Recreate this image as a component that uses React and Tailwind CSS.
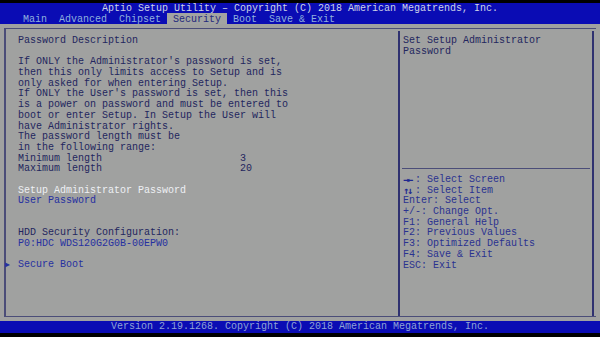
import React from 'react';

const tabs = ['Main', 'Advanced', 'Chipset', 'Security', 'Boot', 'Save & Exit'];

const description = [
  "If ONLY the Administrator's password is set,",
  'then this only limits access to Setup and is',
  'only asked for when entering Setup.',
  "If ONLY the User's password is set, then this",
  'is a power on password and must be entered to',
  'boot or enter Setup. In Setup the User will',
  'have Administrator rights.',
  'The password length must be',
  'in the following range:',
];

const keyHelp = [
  ['→←', ': Select Screen'],
  ['↑↓', ': Select Item'],
  ['', 'Enter: Select'],
  ['', '+/-: Change Opt.'],
  ['', 'F1: General Help'],
  ['', 'F2: Previous Values'],
  ['', 'F3: Optimized Defaults'],
  ['', 'F4: Save & Exit'],
  ['', 'ESC: Exit'],
];

const Line = ({ children, className = '' }) => (
  <div className={`h-[10.7px] whitespace-pre ${className}`}>{children}</div>
);

export default function App() {
  return (
    <div
      className="w-[600px] h-[337px] bg-black flex flex-col overflow-hidden text-[10px] leading-[10.7px]"
      style={{ fontFamily: '"Liberation Mono", "DejaVu Sans Mono", monospace' }}
    >
      <div className="h-[3px]" />
      {/* header */}
      <div className="h-[21px] bg-[#0a0cb4] flex flex-col">
        <div className="h-[10px] leading-[10px] text-center text-[#cdd3e6] pt-[1px]">
          Aptio Setup Utility – Copyright (C) 2018 American Megatrends, Inc.
        </div>
        <div className="flex pl-[17px] h-[11px] leading-[11px]">
          {tabs.map((t) => (
            <div
              key={t}
              className={`px-[6px] h-[11px] pt-[1px] ${
                t === 'Security' ? 'bg-[#a2a4a2] text-[#24287c]' : 'text-[#8fb0de]'
              }`}
            >
              {t}
            </div>
          ))}
        </div>
      </div>

      {/* body */}
      <div className="h-[297px] bg-[#a0a1a0] px-[4px] pt-[4px] pb-[4px] flex">
        <div className="flex-1 flex border-l-2 border-b border-t border-[#4b4d78]">
          {/* left panel */}
          <div className="w-[392px] pl-[12px] pt-[7px] text-[#23265e] relative">
            <Line>Password Description</Line>
            <Line />
            {description.map((l) => (
              <Line key={l}>{l}</Line>
            ))}
            <Line>
              <span className="inline-block w-[222px]">Minimum length</span>3
            </Line>
            <Line>
              <span className="inline-block w-[222px]">Maximum length</span>20
            </Line>
            <Line />
            <Line className="text-[#eef0f4]">Setup Administrator Password</Line>
            <Line className="text-[#2630a0]">User Password</Line>
            <Line />
            <Line />
            <Line>HDD Security Configuration:</Line>
            <Line className="text-[#2630a0]">P0:HDC WDS120G2G0B-00EPW0</Line>
            <Line />
            <Line className="text-[#2630a0] relative">
              <span className="absolute left-[-13px] top-0 text-[8px]">▶</span>
              Secure Boot
            </Line>
          </div>
          {/* right panel */}
          <div className="flex-1 flex flex-col border-l-2 border-r-2 border-[#2f3170] mr-[2px] mt-[2px]">
            <div className="h-[137px] pl-[3px] pt-[5px] text-[#23265e]">
              <Line>Set Setup Administrator</Line>
              <Line>Password</Line>
            </div>
            <div className="h-[1px] bg-[#4b4d78] mx-[2px]" />
            <div className="pl-[3px] pt-[6px] text-[#2a3290]">
              {keyHelp.map(([a, l]) => (
                <Line key={l} className="flex">
                  {a && (
                    <span
                      className="w-[12px] h-[10.7px] leading-[10.7px] font-bold text-[#1e2890] tracking-[-2px] overflow-hidden"
                      style={{ fontFamily: '"DejaVu Sans Mono", monospace' }}
                    >
                      {a}
                    </span>
                  )}
                  <span>{l}</span>
                </Line>
              ))}
            </div>
          </div>
        </div>
      </div>

      {/* footer */}
      <div className="h-[12px] bg-[#0a0cb4] flex justify-center items-center text-[#8fa2d6]">
        Version 2.19.1268. Copyright (C) 2018 American Megatrends, Inc.
      </div>
      <div className="flex-1" />
    </div>
  );
}
